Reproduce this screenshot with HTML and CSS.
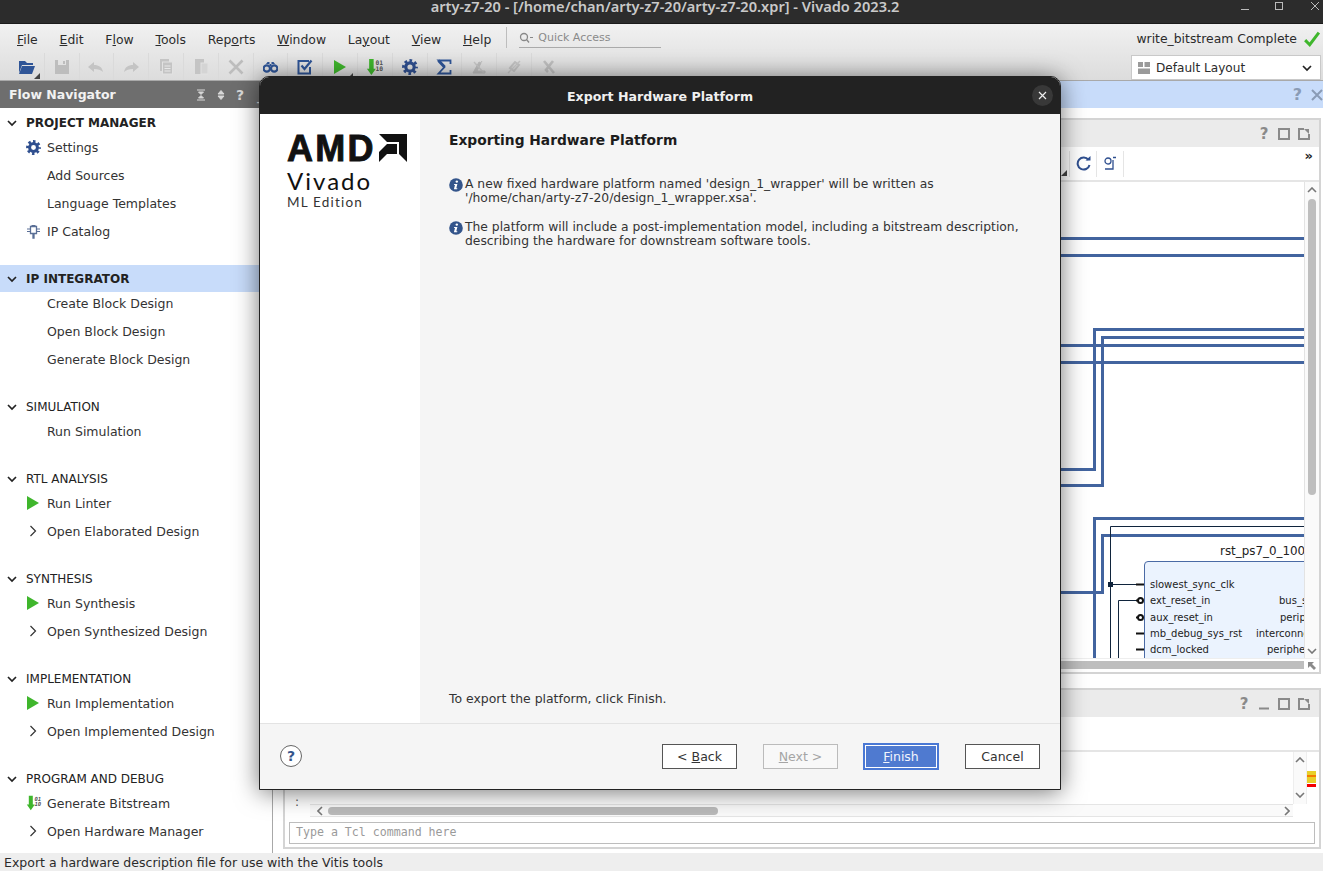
FILE: index.html
```html
<!DOCTYPE html>
<html lang="en">
<head>
<meta charset="utf-8">
<title>arty-z7-20 - Vivado 2023.2</title>
<link rel="stylesheet" href="styles.css">
</head>
<body>
<svg class="defs" width="0" height="0" aria-hidden="true">
  <symbol id="gear" viewBox="0 0 16 16">
    <circle cx="8" cy="8" r="4.2" fill="none" stroke="currentColor" stroke-width="3.2"/>
    <circle cx="8" cy="8" r="6.4" fill="none" stroke="currentColor" stroke-width="3" stroke-dasharray="2.6 2.43" stroke-dashoffset="1.3"/>
  </symbol>
  <symbol id="play" viewBox="0 0 14 16"><path d="M1 1 L13 8 L1 15Z" fill="#3fb62c"/></symbol>
  <symbol id="chev" viewBox="0 0 10 10"><path d="M1 3 L5 7 L9 3" fill="none" stroke="#222" stroke-width="1.7"/></symbol>
  <symbol id="exp" viewBox="0 0 8 12"><path d="M1.5 1 L6.5 6 L1.5 11" fill="none" stroke="#333" stroke-width="1.2"/></symbol>
  <symbol id="info" viewBox="0 0 14 14">
    <circle cx="7" cy="7" r="6.800" fill="#34558b"/>
    <circle cx="7.800" cy="3.600" r="1.200" fill="#fff"/>
    <path d="M5.200 6 H8.400 L7.300 10.300 H8.400 L8.100 11.200 H4.900 L6 6.900 H5Z" fill="#fff"/>
  </symbol>
  <symbol id="maxi" viewBox="0 0 12 12"><rect x="1" y="1" width="10" height="10" fill="none" stroke="#8a8a8a" stroke-width="2"/></symbol>
  <symbol id="float" viewBox="0 0 12 12"><path d="M6 1 H1 V11 H11 V6" fill="none" stroke="#8a8a8a" stroke-width="2"/><path d="M6 1 H11 V6Z" fill="#8a8a8a"/></symbol>
  <symbol id="mini" viewBox="0 0 12 12"><rect x="1" y="9.500" width="10" height="2" fill="#8a8a8a"/></symbol>
</svg>

<div class="app">
  <header class="titlebar">
    <span class="title-text">arty-z7-20 - [/home/chan/arty-z7-20/arty-z7-20.xpr] - Vivado 2023.2</span>
    <div class="win-controls">
      <svg class="win-min" width="10" height="10" viewBox="0 0 10 10"><path d="M1 8.500 H9" stroke="#bbb" stroke-width="1"/></svg>
      <svg class="win-max" width="10" height="10" viewBox="0 0 10 10"><rect x="1.500" y="1.500" width="7" height="7" fill="none" stroke="#bbb"/></svg>
      <svg class="win-close" width="10" height="10" viewBox="0 0 10 10"><path d="M1 1 L9 9 M9 1 L1 9" stroke="#bbb"/></svg>
    </div>
  </header>

  <div class="chrome">
    <div class="menurow">
      <nav class="menu">
        <span><u>F</u>ile</span><span><u>E</u>dit</span><span>F<u>l</u>ow</span><span><u>T</u>ools</span><span>Rep<u>o</u>rts</span><span><u>W</u>indow</span><span>La<u>y</u>out</span><span><u>V</u>iew</span><span><u>H</u>elp</span>
      </nav>
      <div class="quick">
        <svg width="14" height="12" viewBox="0 0 14 12"><circle cx="5" cy="5" r="3.500" fill="none" stroke="#888" stroke-width="1.300"/><path d="M7.500 7.500 L10 10.500" stroke="#888" stroke-width="1.300"/><path d="M11 5.500 H14" stroke="#888"/></svg>
        <span>Quick Access</span>
      </div>
      <div class="runstate">
        <span>write_bitstream Complete</span>
        <svg width="16" height="14" viewBox="0 0 16 14"><path d="M2 8 L6 12 L14 1.500" fill="none" stroke="#3fb62c" stroke-width="2.600"/></svg>
      </div>
    </div>
    <div class="toolrow">
      <div class="tools">
        <div class="tool caret"><svg width="18" height="16" viewBox="0 0 18 16"><path d="M1 2 H7 L9 4 H15 V6 H4 L1 14Z" fill="#2f5597"/><path d="M4 7 H17 L14 15 H1Z" fill="#2f5597"/></svg></div>
        <div class="tool"><svg width="16" height="16" viewBox="0 0 16 16"><path d="M1 1 H15 V15 H1Z M4 1 V6 H12 V1 Z M9 2 V5 H11 V2Z" fill="#bdbdbd" fill-rule="evenodd"/></svg></div>
        <div class="tool"><svg width="18" height="14" viewBox="0 0 18 14"><path d="M7 2 L1 7 L7 12 V9 C11 9 14 10 16 12 C15 7 12 5 7 5Z" fill="#c4c4c4"/></svg></div>
        <div class="tool"><svg width="18" height="14" viewBox="0 0 18 14"><path d="M11 2 L17 7 L11 12 V9 C7 9 4 10 2 12 C3 7 6 5 11 5Z" fill="#c4c4c4"/></svg></div>
        <div class="tool"><svg width="14" height="17" viewBox="0 0 14 17"><rect x="1" y="1" width="9" height="12" fill="#c4c4c4"/><rect x="3.500" y="4" width="10" height="12" fill="#c4c4c4" stroke="#e2e2e2"/><path d="M5.500 8 H11.500 M5.500 10.500 H11.500 M5.500 13 H11.500" stroke="#e8e8e8"/></svg></div>
        <div class="tool"><svg width="14" height="17" viewBox="0 0 14 17"><rect x="1" y="1" width="9" height="15" fill="#c4c4c4"/><rect x="7" y="5" width="7" height="11" fill="#d4d4d4" stroke="#e2e2e2"/></svg></div>
        <div class="tool"><svg width="16" height="16" viewBox="0 0 16 16"><path d="M1.500 1.500 L14.500 14.500 M14.500 1.500 L1.500 14.500" stroke="#bdbdbd" stroke-width="2.600"/></svg></div>
        <div class="tool"><svg width="15" height="12" viewBox="0 0 15 12"><circle cx="3.800" cy="7.500" r="3.200" fill="none" stroke="#2f5597" stroke-width="2.200"/><circle cx="11.200" cy="7.500" r="3.200" fill="none" stroke="#2f5597" stroke-width="2.200"/><path d="M3 3 L4.500 1 H6.500 V5 H8.500 V1 H10.500 L12 3" fill="#2f5597"/></svg></div>
        <div class="tool"><svg width="16" height="16" viewBox="0 0 16 16"><path d="M12 2 H1.500 V14.500 H13 V8" fill="none" stroke="#2f5597" stroke-width="2"/><path d="M4.500 6.500 L7.500 10 L14.500 1.500" fill="none" stroke="#2f5597" stroke-width="2.200"/></svg></div>
        <div class="tool caret"><svg class="icon14" width="14" height="16"><use href="#play"/></svg></div>
        <div class="tool"><svg width="18" height="18" viewBox="0 0 20 20"><path d="M3.500 1 H8.500 V12 H11 L6 19 L1 12 H3.500Z" fill="#3fb62c"/><text x="10.500" y="7.500" class="bit-text">01</text><text x="10.500" y="14" class="bit-text">10</text></svg></div>
        <div class="tool gear-blue"><svg width="16" height="16"><use href="#gear"/></svg></div>
        <div class="tool"><svg width="16" height="16" viewBox="0 0 16 16"><path d="M14.500 5 V1.500 H2.500 L8.500 8 L2.500 14.500 H14.500 V11" fill="none" stroke="#2f5597" stroke-width="1.800"/><path d="M2.500 1.500 L8.500 8" stroke="#2f5597" stroke-width="3"/></svg></div>
        <div class="tool"><svg width="16" height="16" viewBox="0 0 16 16"><path d="M2 14 H14 V12 H6 L10 4 L8 3Z M11 2 L5 11" fill="#c0c0c0" stroke="#c0c0c0"/><path d="M3 3 L13 14" stroke="#c8c8c8" stroke-width="1.500"/></svg></div>
        <div class="tool"><svg width="16" height="16" viewBox="0 0 16 16"><path d="M4 9 L9 3 L13 6 L8 12Z" fill="none" stroke="#c4c4c4" stroke-width="2"/><path d="M2 14 L14 2" stroke="#c8c8c8" stroke-width="1.500"/></svg></div>
        <div class="tool"><svg width="16" height="16" viewBox="0 0 16 16"><path d="M3 2 L13 14 M12 2 L5 11 L7 13" fill="none" stroke="#c0c0c0" stroke-width="2.600"/></svg></div>
      </div>
      <div class="combo">
        <svg width="12" height="12" viewBox="0 0 12 12"><path d="M0 0 H5 V5 H0Z M6.500 0 H12 V5 H6.500Z M0 6.500 H12 V12 H0Z" fill="#9a9a9a"/></svg>
        <span>Default Layout</span>
        <svg class="combo-chev" width="10" height="10"><use href="#chev"/></svg>
      </div>
    </div>
  </div>

  <main class="workspace">
    <aside class="flownav">
      <div class="nav-head">
        <span>Flow Navigator</span>
        <div class="nav-head-icons">
          <svg width="10" height="12" viewBox="0 0 10 12"><path d="M1 1 H9 M1 11 H9 M2.500 3 H7.500 L5 5.500Z M2.500 9 H7.500 L5 6.500Z" stroke="#d8d8d8" fill="#d8d8d8"/></svg>
          <svg width="10" height="12" viewBox="0 0 10 12"><path d="M2 5 L5 1.500 L8 5Z M2 7 L5 10.500 L8 7Z" stroke="#d8d8d8" fill="#d8d8d8"/></svg>
          <b>?</b>
          <b class="nav-min">_</b>
        </div>
      </div>
      <section class="sec">
        <div class="sec-head strong"><svg width="10" height="10"><use href="#chev"/></svg><span>PROJECT MANAGER</span></div>
        <div class="row"><i class="gear-blue"><svg width="15" height="15"><use href="#gear"/></svg></i><span>Settings</span></div>
        <div class="row"><i></i><span>Add Sources</span></div>
        <div class="row"><i></i><span>Language Templates</span></div>
        <div class="row"><i><svg width="15" height="15" viewBox="0 0 15 15"><path d="M4.500 2.500 H10.500 V9.500 H8 V14 H7 V9.500 H4.500Z" fill="none" stroke="#5a6f96" stroke-width="1.300"/><path d="M1 5 H4 M1 7.500 H4 M11 5 H14 M11 7.500 H14 M5.500 1.500 H9.500" stroke="#5a6f96"/></svg></i><span>IP Catalog</span></div>
      </section>
      <section class="sec">
        <div class="sec-head strong active"><svg width="10" height="10"><use href="#chev"/></svg><span>IP INTEGRATOR</span></div>
        <div class="row"><i></i><span>Create Block Design</span></div>
        <div class="row"><i></i><span>Open Block Design</span></div>
        <div class="row"><i></i><span>Generate Block Design</span></div>
      </section>
      <section class="sec">
        <div class="sec-head"><svg width="10" height="10"><use href="#chev"/></svg><span>SIMULATION</span></div>
        <div class="row"><i></i><span>Run Simulation</span></div>
      </section>
      <section class="sec">
        <div class="sec-head"><svg width="10" height="10"><use href="#chev"/></svg><span>RTL ANALYSIS</span></div>
        <div class="row"><i><svg width="14" height="16"><use href="#play"/></svg></i><span>Run Linter</span></div>
        <div class="row"><i class="exp"><svg width="8" height="12"><use href="#exp"/></svg></i><span>Open Elaborated Design</span></div>
      </section>
      <section class="sec">
        <div class="sec-head"><svg width="10" height="10"><use href="#chev"/></svg><span>SYNTHESIS</span></div>
        <div class="row"><i><svg width="14" height="16"><use href="#play"/></svg></i><span>Run Synthesis</span></div>
        <div class="row"><i class="exp"><svg width="8" height="12"><use href="#exp"/></svg></i><span>Open Synthesized Design</span></div>
      </section>
      <section class="sec">
        <div class="sec-head"><svg width="10" height="10"><use href="#chev"/></svg><span>IMPLEMENTATION</span></div>
        <div class="row"><i><svg width="14" height="16"><use href="#play"/></svg></i><span>Run Implementation</span></div>
        <div class="row"><i class="exp"><svg width="8" height="12"><use href="#exp"/></svg></i><span>Open Implemented Design</span></div>
      </section>
      <section class="sec">
        <div class="sec-head"><svg width="10" height="10"><use href="#chev"/></svg><span>PROGRAM AND DEBUG</span></div>
        <div class="row"><i><svg width="16" height="16" viewBox="0 0 20 20"><path d="M3.500 1 H8.500 V12 H11 L6 19 L1 12 H3.500Z" fill="#3fb62c"/><text x="10.500" y="7.500" class="bit-text">01</text><text x="10.500" y="14" class="bit-text">10</text></svg></i><span>Generate Bitstream</span></div>
        <div class="row"><i class="exp"><svg width="8" height="12"><use href="#exp"/></svg></i><span>Open Hardware Manager</span></div>
      </section>
    </aside>

    <div class="pane">
      <div class="pane-head">
        <b>?</b>
        <svg width="12" height="12" viewBox="0 0 12 12"><path d="M1 1 L11 11 M11 1 L1 11" stroke="#8a9bb5" stroke-width="2"/></svg>
      </div>
      <div class="pane-body">
        <section class="panel panel-diagram">
          <div class="panel-strip">
            <b>?</b>
            <svg width="12" height="12"><use href="#maxi"/></svg>
            <svg width="12" height="12"><use href="#float"/></svg>
          </div>
          <div class="panel-tools">
            <div class="pt-drop"></div>
            <div class="pt-cell"><svg width="15" height="15" viewBox="0 0 15 15"><path d="M12.500 4 A6 6 0 1 0 13.500 9" fill="none" stroke="#2f4f8f" stroke-width="2"/><path d="M9.500 4.500 H14.500 V0Z" fill="#2f4f8f"/></svg></div>
            <div class="pt-cell pt-last"><svg width="14" height="16" viewBox="0 0 14 16"><circle cx="5" cy="5" r="3" fill="none" stroke="#2f4f8f" stroke-width="1.300"/><path d="M10 1.500 H13 M10 4 V13 H2" fill="none" stroke="#2f4f8f" stroke-width="1.300"/></svg></div>
            <span class="more">»</span>
          </div>
          <div class="canvas-row">
            <svg class="diagram" width="1019" height="476" viewBox="285 182 1019 476">
              <g class="bus">
                <path d="M1000 238.500 H1304 M1000 255.500 H1304 M1000 345.500 H1304 M1000 362.500 H1304"/>
                <path d="M1000 469.500 H1094.500 V329.500 H1304 M1000 485.500 H1102.500 V337.500 H1304"/>
                <path d="M1304 518.500 H1094.500 V658 M1304 535.500 H1102.500 V592.500 H1000"/>
              </g>
              <g class="net">
                <path d="M1304 526.500 H1110.500 V658 M1110.500 584.500 H1136 M1118.500 658 V600.500 H1136"/>
              </g>
              <rect class="dot" x="1108" y="582" width="5" height="5"/>
              <path class="block" d="M1144.500 660 V565 Q1144.500 561.500 1148 561.500 H1310 V660Z"/>
              <g class="stub">
                <path d="M1136 584.500 H1144 M1136 633.500 H1144 M1136 649.500 H1144"/>
                <path d="M1136 600.500 H1138 M1136 617.500 H1138"/>
              </g>
              <circle class="pin" cx="1140.500" cy="600.500" r="2.500"/>
              <circle class="pin" cx="1140.500" cy="617.500" r="2.500"/>
              <text class="bname" x="1220" y="555">rst_ps7_0_100</text>
              <g class="port">
                <text x="1150" y="588">slowest_sync_clk</text>
                <text x="1150" y="604">ext_reset_in</text>
                <text x="1150" y="621">aux_reset_in</text>
                <text x="1150" y="637">mb_debug_sys_rst</text>
                <text x="1150" y="653">dcm_locked</text>
                <text x="1279" y="604">bus_struct_reset</text>
                <text x="1280" y="621">peripheral_reset</text>
                <text x="1256" y="637">interconnect_aresetn</text>
                <text x="1267" y="653">peripheral_aresetn</text>
              </g>
            </svg>
            <div class="vscroll">
              <svg class="arrow" width="10" height="6" viewBox="0 0 10 6"><path d="M1 5 L5 1 L9 5" fill="none" stroke="#777" stroke-width="1.600"/></svg>
              <div class="vthumb"></div>
              <svg class="arrow" width="10" height="6" viewBox="0 0 10 6"><path d="M1 1 L5 5 L9 1" fill="none" stroke="#777" stroke-width="1.600"/></svg>
            </div>
          </div>
          <div class="hscroll-row">
            <div class="hthumb"></div>
            <svg class="corner" width="10" height="10" viewBox="0 0 10 10"><path d="M1 1 H7 L5 3 L9 7 L7 9 L3 5 L1 7Z" fill="#8a8a8a"/></svg>
          </div>
        </section>

        <section class="panel panel-console">
          <div class="panel-strip">
            <b>?</b>
            <svg width="12" height="12"><use href="#mini"/></svg>
            <svg width="12" height="12"><use href="#maxi"/></svg>
            <svg width="12" height="12"><use href="#float"/></svg>
          </div>
          <div class="console-tabs"></div>
          <div class="console-main">
            <div class="console-text"><span class="dots">:</span></div>
            <div class="console-v">
              <svg width="10" height="6" viewBox="0 0 10 6"><path d="M1 5 L5 1 L9 5" fill="none" stroke="#777" stroke-width="1.600"/></svg>
              <svg width="10" height="6" viewBox="0 0 10 6"><path d="M1 1 L5 5 L9 1" fill="none" stroke="#777" stroke-width="1.600"/></svg>
            </div>
            <div class="markers"><span class="m-y1"></span><span class="m-o"></span><span class="m-y2"></span><span class="m-r"></span></div>
          </div>
          <div class="console-h">
            <svg width="6" height="10" viewBox="0 0 6 10"><path d="M5 1 L1 5 L5 9" fill="none" stroke="#777" stroke-width="1.600"/></svg>
            <div class="console-hthumb"></div>
            <svg class="console-hnext" width="6" height="10" viewBox="0 0 6 10"><path d="M1 1 L5 5 L1 9" fill="none" stroke="#777" stroke-width="1.600"/></svg>
          </div>
          <div class="tcl">Type a Tcl command here</div>
        </section>
      </div>
    </div>
  </main>

  <footer class="statusbar">Export a hardware description file for use with the Vitis tools</footer>
</div>

<div class="dialog">
  <div class="dlg-title">
    <span>Export Hardware Platform</span>
    <button class="dlg-close" type="button"><svg width="9" height="9" viewBox="0 0 9 9"><path d="M1 1 L8 8 M8 1 L1 8" stroke="#eee" stroke-width="1.200"/></svg></button>
  </div>
  <div class="dlg-body">
    <div class="dlg-side">
      <div class="logo-amd">
        <span>AMD</span>
        <svg width="28" height="28" viewBox="0 0 28 28"><path d="M0 0 H28 V28 L20 20 V8 H8Z" fill="#111"/><path d="M8 10 H18 V20 H8 L0 28 V18Z" fill="#111"/></svg>
      </div>
      <div class="logo-vivado">Vivado</div>
      <div class="logo-ml">ML Edition</div>
    </div>
    <div class="dlg-content">
      <h1>Exporting Hardware Platform</h1>
      <div class="note">
        <svg width="14" height="14"><use href="#info"/></svg>
        <p>A new fixed hardware platform named 'design_1_wrapper' will be written as<br>'/home/chan/arty-z7-20/design_1_wrapper.xsa'.</p>
      </div>
      <div class="note">
        <svg width="14" height="14"><use href="#info"/></svg>
        <p>The platform will include a post-implementation model, including a bitstream description,<br>describing the hardware for downstream software tools.</p>
      </div>
      <p class="hint">To export the platform, click Finish.</p>
    </div>
  </div>
  <div class="dlg-foot">
    <span class="help">?</span>
    <button class="btn" type="button">&lt; <u>B</u>ack</button>
    <button class="btn disabled" type="button"><u>N</u>ext &gt;</button>
    <button class="btn primary" type="button"><u>F</u>inish</button>
    <button class="btn" type="button">Cancel</button>
  </div>
</div>
</body>
</html>
```

FILE: styles.css
```css
* { box-sizing: border-box; }
html, body { margin: 0; padding: 0; height: 100%; overflow: hidden; }
body { font-family: "DejaVu Sans", sans-serif; font-size: 12.5px; color: #222; background: #fff; }
.defs { position: absolute; }
.bit-text { font-family: "DejaVu Sans Mono", monospace; font-size: 7px; font-weight: 700; fill: #555; }

.app { width: 1323px; height: 871px; display: flex; flex-direction: column; }

.titlebar { height: 24px; flex: none; background: #2c2c2c; border-bottom: 1px solid #1b1b1b; display: flex; justify-content: center; position: relative; overflow: hidden; padding-left: 7px; }
.title-text { font: 600 14.6px/13px "Noto Sans", sans-serif; color: #c9c9c9; }
.win-controls { position: absolute; inset: 0; }
.win-min { position: absolute; left: 1240px; top: 1px; }
.win-max { position: absolute; left: 1274px; top: 1px; }
.win-close { position: absolute; left: 1310px; top: 1px; }

.chrome { height: 57px; flex: none; background: linear-gradient(#f1f1f1, #dcdcdc); border-bottom: 1px solid #a9a9a9; display: flex; flex-direction: column; }
.menurow { height: 29px; display: flex; align-items: center; padding-left: 17px; padding-right: 1px; }
.menu { display: flex; gap: 21.8px; font-size: 12.4px; color: #2b2b2b; padding-top: 1px; }
.quick { margin-left: 15px; margin-top: -2px; width: 155px; height: 21px; border-left: 1px solid #bdbdbd; position: relative; display: flex; align-items: center; gap: 5px; padding-left: 12px; font-size: 11px; color: #8a8a8a; }
.quick::after { content: ""; position: absolute; left: 12px; right: 0; bottom: 0; border-bottom: 1px solid #aaa; }
.runstate { margin-left: auto; display: flex; align-items: center; gap: 5px; font-size: 12.4px; color: #2b2b2b; }
.runstate svg { width: 20px; height: 16px; }

.toolrow { flex: 1; display: flex; align-items: flex-start; padding-left: 10px; padding-right: 2px; }
.tools { display: flex; height: 27px; }
.tool { width: 34.8px; height: 27px; display: flex; align-items: center; justify-content: center; border-right: 1px solid #dadada; position: relative; flex: none; }
.tool:last-child { border-right: 0; }
.caret::after { content: ""; position: absolute; right: 4px; bottom: 1px; border: 3px solid transparent; border-right-color: #444; border-bottom-color: #444; }
.gear-blue { color: #2f4f8f; }
.combo { margin-left: auto; width: 190px; height: 25px; margin-top: 2px; background: #fff; border: 1px solid #c9c9c9; display: flex; align-items: center; gap: 6px; padding: 0 8px 0 6px; font-size: 12.1px; color: #2b2b2b; }
.combo-chev { margin-left: auto; }

.workspace { flex: 1; display: flex; min-height: 0; }
.flownav { width: 273px; flex: none; border-right: 1px solid #a8a8a8; background: #fff; overflow: hidden; }
.nav-head { height: 27px; background: #6e6e6e; color: #f2f2f2; display: flex; align-items: center; justify-content: space-between; padding: 0 8px 0 9px; font-size: 12.5px; font-weight: 700; }
.nav-head-icons { display: flex; align-items: center; gap: 10px; font-size: 14px; color: #d8d8d8; }
.nav-min { margin-left: 3px; }

.sec { margin-top: 1px; margin-bottom: 23px; }
.sec + .sec { margin-top: 0; }
.sec-head { height: 27px; display: flex; align-items: center; gap: 9px; padding-left: 7px; font-size: 12px; color: #222; }
.sec-head.strong { font-weight: 700; }
.sec-head.active { background: #c8dcfa; }
.row { height: 22px; margin-bottom: 6px; display: flex; align-items: center; padding-left: 26px; font-size: 12.5px; color: #333; }
.row:last-child { margin-bottom: 0; }
.row i { width: 21px; flex: none; display: flex; align-items: center; height: 16px; }
.row i.exp { padding-left: 3px; }

.pane { flex: 1; min-width: 0; display: flex; flex-direction: column; }
.pane-head { height: 27px; flex: none; background: #c8dcfa; display: flex; align-items: center; justify-content: flex-end; gap: 9px; padding-right: 0; color: #8a9bb5; font-size: 16px; }
.pane-body { flex: 1; min-height: 0; display: flex; flex-direction: column; gap: 14px; padding: 10px 2px 4px 10px; }
.panel { border: 2px solid #d4d4d4; background: #fff; display: flex; flex-direction: column; min-height: 0; }
.panel-diagram { height: 556px; flex: none; }
.panel-console { flex: 1; }
.panel-strip { height: 27px; flex: none; background: #ebebeb; display: flex; align-items: center; justify-content: flex-end; gap: 8px; padding-right: 9px; color: #8a8a8a; font-size: 15px; }
.panel-strip b { width: 12px; text-align: center; }
.panel-tools { height: 35px; flex: none; display: flex; align-items: center; border-bottom: 2px solid #e5e5e5; padding-left: 775px; position: relative; }
.pt-drop { width: 9px; height: 26px; position: relative; }
.pt-drop::after { content: ""; position: absolute; right: 2px; bottom: 1px; border: 3px solid transparent; border-right-color: #444; border-bottom-color: #444; }
.pt-cell { width: 27px; height: 26px; flex: none; display: flex; align-items: center; justify-content: center; border-left: 1px solid #e5e5e5; }
.pt-last { width: 28px; border-right: 1px solid #e5e5e5; }
.more { position: absolute; right: 6px; top: 0; font-size: 13px; font-weight: 700; color: #222; line-height: 18px; }
.canvas-row { flex: 1; min-height: 0; display: flex; }
.diagram { flex: none; display: block; overflow: hidden; }
.bus { fill: none; stroke: #42649f; stroke-width: 3; }
.net { fill: none; stroke: #10243c; stroke-width: 1; }
.dot { fill: #10243c; }
.block { fill: #ebf3fe; stroke: #4a6aa5; stroke-width: 1; }
.stub { fill: none; stroke: #111; stroke-width: 2; }
.pin { fill: #fff; stroke: #111; stroke-width: 2; }
.bname { font: 11.9px "DejaVu Sans", sans-serif; fill: #222; }
.port text { font: 10px "DejaVu Sans", sans-serif; fill: #222; }

.vscroll { flex: 1; background: #fafafa; border-left: 1px solid #e3e3e3; display: flex; flex-direction: column; align-items: center; padding: 5px 0 4px; }
.vthumb { width: 8px; height: 296px; margin-top: 6px; border-radius: 4px; background: #bebebe; }
.arrow:last-child { margin-top: auto; }
.hscroll-row { height: 14px; flex: none; display: flex; align-items: flex-start; background: #fff; border-top: 1px solid #eee; }
.hthumb { width: 1019px; height: 8px; margin-top: 2px; background: #bebebe; }
.corner { margin: 2px 0 0 3px; }

.console-tabs { height: 35px; flex: none; border-bottom: 2px solid #e5e5e5; }
.console-main { height: 52px; flex: none; display: flex; }
.console-text { flex: 1; position: relative; }
.dots { position: absolute; left: 10px; bottom: -5px; color: #555; font-size: 12px; }
.console-v { width: 14px; flex: none; background: #fafafa; border-left: 1px solid #eee; border-right: 1px solid #eee; display: flex; flex-direction: column; align-items: center; justify-content: space-between; padding: 5px 0 6px; }
.markers { width: 12px; flex: none; padding-top: 19px; padding-right: 3px; display: flex; flex-direction: column; }
.markers span { display: block; }
.m-y1 { height: 4px; background: #e8d02a; }
.m-o { height: 2px; background: #f57c00; }
.m-y2 { height: 6px; background: #e8d02a; }
.m-r { height: 3px; margin-top: 1px; background: #f40000; }
.console-h { height: 13px; flex: none; margin: 0 26px 0 25px; background: #fafafa; border-top: 1px solid #e5e5e5; border-bottom: 1px solid #e5e5e5; display: flex; align-items: center; gap: 5px; padding-left: 7px; }
.console-hthumb { width: 390px; height: 8px; border-radius: 4px; background: #bababa; }
.console-hnext { margin-left: auto; margin-right: 3px; }
.tcl { height: 22px; flex: none; margin: 5px 4px 0 4px; border: 1px solid #bdbdbd; padding-left: 6px; font: 11.6px/18px "DejaVu Sans Mono", monospace; color: #9a9a9a; }

.statusbar { height: 18px; flex: none; background: #eeeeee; padding-left: 4px; font-size: 12.5px; line-height: 20px; color: #2b2b2b; overflow: hidden; }

.dialog { position: absolute; left: 259px; top: 76px; width: 802px; height: 714px; background: #f5f5f5; border: 1px solid #222; border-radius: 10px 10px 0 0; box-shadow: 0 2px 24px rgba(0,0,0,.55); display: flex; flex-direction: column; overflow: hidden; }
.dlg-title { height: 37px; flex: none; background: #222; color: #f0f0f0; display: flex; align-items: center; justify-content: center; padding-top: 1px; font-size: 12.6px; font-weight: 700; position: relative; }
.dlg-close { position: absolute; right: 7px; top: 8px; width: 21px; height: 21px; border-radius: 50%; border: 0; padding: 0; background: #383838; display: flex; align-items: center; justify-content: center; }
.dlg-body { flex: 1; min-height: 0; display: flex; }
.dlg-side { width: 160px; flex: none; background: #fff; padding: 20px 0 0 27px; color: #111; }
.logo-amd { display: flex; align-items: flex-start; gap: 3px; height: 35px; }
.logo-amd span { font: 700 36px/30px "Liberation Sans", sans-serif; letter-spacing: 2.2px; -webkit-text-stroke: .9px #111; height: 28px; }
.logo-vivado { font: 400 24px/24px "Lato", sans-serif; letter-spacing: 2px; }
.logo-ml { font: 400 13.5px/14px "Lato", sans-serif; color: #333; letter-spacing: 1.2px; margin-top: 2px; }
.dlg-content { flex: 1; min-width: 0; padding: 17px 20px 16px 29px; display: flex; flex-direction: column; font-size: 12.33px; color: #333; }
.dlg-content h1 { margin: 0 0 28px; font-size: 13.8px; line-height: 18px; font-weight: 700; color: #1c1c1c; }
.note { display: flex; gap: 2px; margin-bottom: 15px; align-items: flex-start; }
.note svg { flex: none; margin-top: 1px; }
.note p { margin: 0; line-height: 14px; white-space: nowrap; }
.hint { margin: auto 0 0; line-height: 16px; font-size: 12.45px; }
.dlg-foot { height: 66px; flex: none; border-top: 1px solid #e3e3e3; display: flex; align-items: center; gap: 26px; padding: 0 20px; }
.help { width: 22px; height: 22px; margin-right: auto; margin-bottom: 2px; border: 1px solid #666; border-radius: 50%; background: #fff; text-align: center; font: 700 14px/20px "DejaVu Sans", sans-serif; color: #34558b; }
.btn { width: 75px; height: 25px; padding: 0; background: #fff; border: 1px solid #555; font: 12.5px "DejaVu Sans", sans-serif; color: #333; }
.btn.disabled { border-color: #bbb; color: #a5a5a5; background: #f8f8f8; }
.btn.primary { width: 76px; height: 27px; margin-left: -1px; background: #4f7ad0; border: 2px solid #4a78d4; box-shadow: inset 0 0 0 1px #fff; color: #f2f5fc; }
```
